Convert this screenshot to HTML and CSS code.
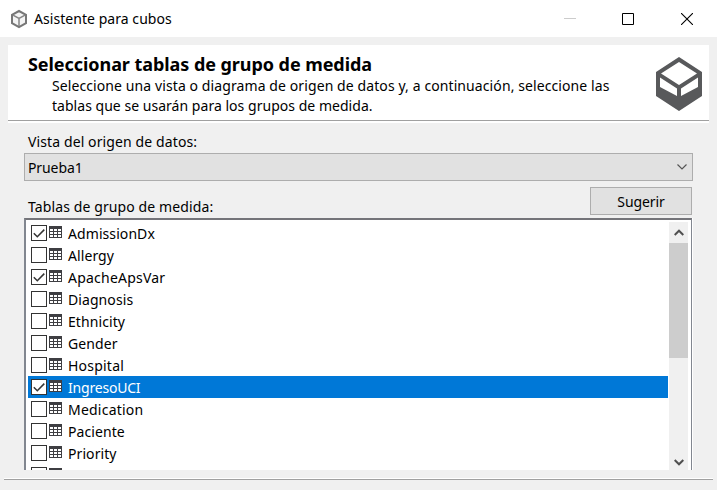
FILE: index.html
```html
<!DOCTYPE html>
<html lang="es">
<head>
<meta charset="utf-8">
<title>Asistente para cubos</title>
<link rel="stylesheet" href="styles.css">
</head>
<body>
<svg class="defs" aria-hidden="true">
  <symbol id="table" viewBox="0 0 13 12"><path fill="#3e3e42" d="M0 0h13v12H0z"/><path fill="#fff" d="M1 3h3v2H1zM5 3h3v2H5zM9 3h3v2H9zM1 6h3v2H1zM5 6h3v2H5zM9 6h3v2H9zM1 9h3v2H1zM5 9h3v2H5zM9 9h3v2H9z"/></symbol>
  <symbol id="check" viewBox="0 0 14 14"><path fill="none" stroke="#333" stroke-width="1.5" d="M1.8 7.2 5.3 10.7 12.3 3.6"/></symbol>
</svg>
<header class="titlebar">
  <svg class="app-icon" viewBox="0 0 18 20"><path d="M9 2 16 5.8V14.2L9 18.2 2 14.2V5.8Z" fill="#f4f4f4" stroke="#777" stroke-width="2"/><path d="M3 6.2 9 9.5 15 6.2M9 9.5V17" fill="none" stroke="#858585" stroke-width="1.5"/></svg>
  <span class="caption">Asistente para cubos</span>
  <div class="controls">
    <svg class="minimize" viewBox="0 0 12 12"><path d="M0 5.5H12" stroke="#ccc"/></svg>
    <svg viewBox="0 0 12 12"><path d="M.5.5h11v11H.5z" stroke="#000" fill="none"/></svg>
    <svg viewBox="0 0 12 12"><path d="M0 0 12 12M12 0 0 12" stroke="#000" stroke-width="1.1"/></svg>
  </div>
</header>
<section class="banner">
  <div class="intro">
    <h1><span>Seleccionar tablas de grupo de medida</span></h1>
    <p><span class="line1">Seleccione una vista o diagrama de origen de datos y, a continuación, seleccione las</span><br><span class="line2">tablas que se usarán para los grupos de medida.</span></p>
  </div>
  <svg class="cube" viewBox="0 0 46 54"><path fill="#58595b" fill-rule="evenodd" d="M23 0 46 15V39L23 54 0 39V15ZM23 5 5 16.5 23 28 41 16.5ZM4 20.5V30L21 39V31.5ZM42 20.5V30L25 39V31.5Z"/></svg>
</section>
<main>
  <div class="label source"><span>Vista del origen de datos:</span></div>
  <div class="combo"><span>Prueba1</span><svg viewBox="0 0 10 6"><path d="M.5.5 5 5 9.5.5" fill="none" stroke="#555" stroke-width="1.2"/></svg></div>
  <div class="middle"><div class="label tables"><span>Tablas de grupo de medida:</span></div><button><span>Sugerir</span></button></div>
  <div class="list">
    <ul>
      <li><i class="box"><svg><use href="#check"/></svg></i><svg class="table"><use href="#table"/></svg><span>AdmissionDx</span></li>
      <li><i class="box"></i><svg class="table"><use href="#table"/></svg><span>Allergy</span></li>
      <li><i class="box"><svg><use href="#check"/></svg></i><svg class="table"><use href="#table"/></svg><span class="wide">ApacheApsVar</span></li>
      <li><i class="box"></i><svg class="table"><use href="#table"/></svg><span>Diagnosis</span></li>
      <li><i class="box"></i><svg class="table"><use href="#table"/></svg><span>Ethnicity</span></li>
      <li><i class="box"></i><svg class="table"><use href="#table"/></svg><span>Gender</span></li>
      <li><i class="box"></i><svg class="table"><use href="#table"/></svg><span class="wide">Hospital</span></li>
      <li class="selected"><i class="box"><svg><use href="#check"/></svg></i><svg class="table"><use href="#table"/></svg><span>IngresoUCI</span></li>
      <li><i class="box"></i><svg class="table"><use href="#table"/></svg><span class="wide">Medication</span></li>
      <li><i class="box"></i><svg class="table"><use href="#table"/></svg><span>Paciente</span></li>
      <li><i class="box"></i><svg class="table"><use href="#table"/></svg><span>Priority</span></li>
      <li><i class="box"></i><svg class="table"><use href="#table"/></svg></li>
    </ul>
    <div class="scroll">
      <svg viewBox="0 0 10 7"><path d="M.7 6 5 1.7 9.3 6" fill="none" stroke="#505050" stroke-width="2"/></svg>
      <div class="thumb"></div>
      <svg class="down" viewBox="0 0 10 7"><path d="M.7 1 5 5.3 9.3 1" fill="none" stroke="#505050" stroke-width="2"/></svg>
    </div>
  </div>
</main>
<div class="separator"></div>
</body>
</html>
```
FILE: styles.css
```css
* { box-sizing: border-box; }
body { margin: 0; width: 717px; height: 490px; overflow: hidden; background: #f0f0f0; color: #000; font: 14px/20px "Noto Sans", "Open Sans", sans-serif; }
span { white-space: nowrap; }
svg { display: block; }
.defs { display: none; }
.titlebar { height: 37px; background: #fff; display: flex; align-items: center; padding: 0 24px 0 10px; }
.app-icon { width: 18px; height: 20px; margin-right: 6px; }
.caption { letter-spacing: .05px; }
.controls { margin-left: auto; display: flex; gap: 47px; }
.controls svg { width: 12px; height: 12px; }
.controls .minimize { margin-right: -1px; }
.banner { margin: 8px 8px 0; height: 78px; background: linear-gradient(#a0a0a0, #a0a0a0) 0 75px / 100% 1px no-repeat #fff; display: flex; justify-content: space-between; padding: 8px 7px 0 20px; }
h1 { margin: 0; font-size: 18px; line-height: 22px; font-weight: 700; letter-spacing: -.06px; }
p { margin: 1px 0 0 24px; }
.line1 { letter-spacing: .095px; }
.line2 { letter-spacing: .03px; }
.cube { width: 46px; height: 54px; margin-top: 4px; }
main { padding: 9px 24px 0; }
.label { padding-left: 4px; letter-spacing: .11px; }
.combo { margin-top: 1px; width: 669px; height: 28px; background: #e1e1e1; border: 1px solid #adadad; display: flex; align-items: center; justify-content: space-between; padding: 0 5px 0 3px; }
.combo span { padding-top: 2px; letter-spacing: -.1px; }
.combo svg { width: 10px; height: 6px; }
.middle { display: flex; justify-content: space-between; margin-top: 6px; height: 31px; padding-right: 1px; }
.tables { padding-top: 10px; }
button { width: 102px; height: 28px; border: 1px solid #adadad; background: #e1e1e1; padding: 2px 0 0; font: inherit; color: inherit; letter-spacing: -.1px; }
.list { width: 668px; height: 252px; background: #fff; border: solid #828790; border-width: 2px 1px 0 2px; border-top-color: #747479; padding: 2px 3px 0 2px; display: flex; justify-content: space-between; overflow: hidden; box-shadow: 1px 0 #fff; }
ul { margin: 0; padding: 0; list-style: none; width: 640px; }
li { height: 22px; display: flex; align-items: center; padding-left: 3px; }
li span { padding-top: 2px; letter-spacing: .08px; }
li .wide { letter-spacing: .22px; }
.selected { background: #0078d7; color: #fff; }
.selected span { letter-spacing: -.2px; }
.box { width: 16px; height: 16px; border: 1px solid #333; background: #fff; margin-right: 2px; }
.box svg { width: 14px; height: 14px; }
.table { width: 13px; height: 12px; margin: -2px 6px 0 0; }
.scroll { width: 19px; height: 248px; background: #f0f0f0; display: flex; flex-direction: column; }
.scroll svg { width: 10px; height: 7px; margin: 7px 0 7px 5px; }
.thumb { height: 115px; background: #cdcdcd; }
.scroll .down { margin-top: auto; margin-bottom: 4px; }
.separator { margin: 8px 4px 0; height: 2px; background: #a0a0a0; border-top: 1px solid #fff; }
```
